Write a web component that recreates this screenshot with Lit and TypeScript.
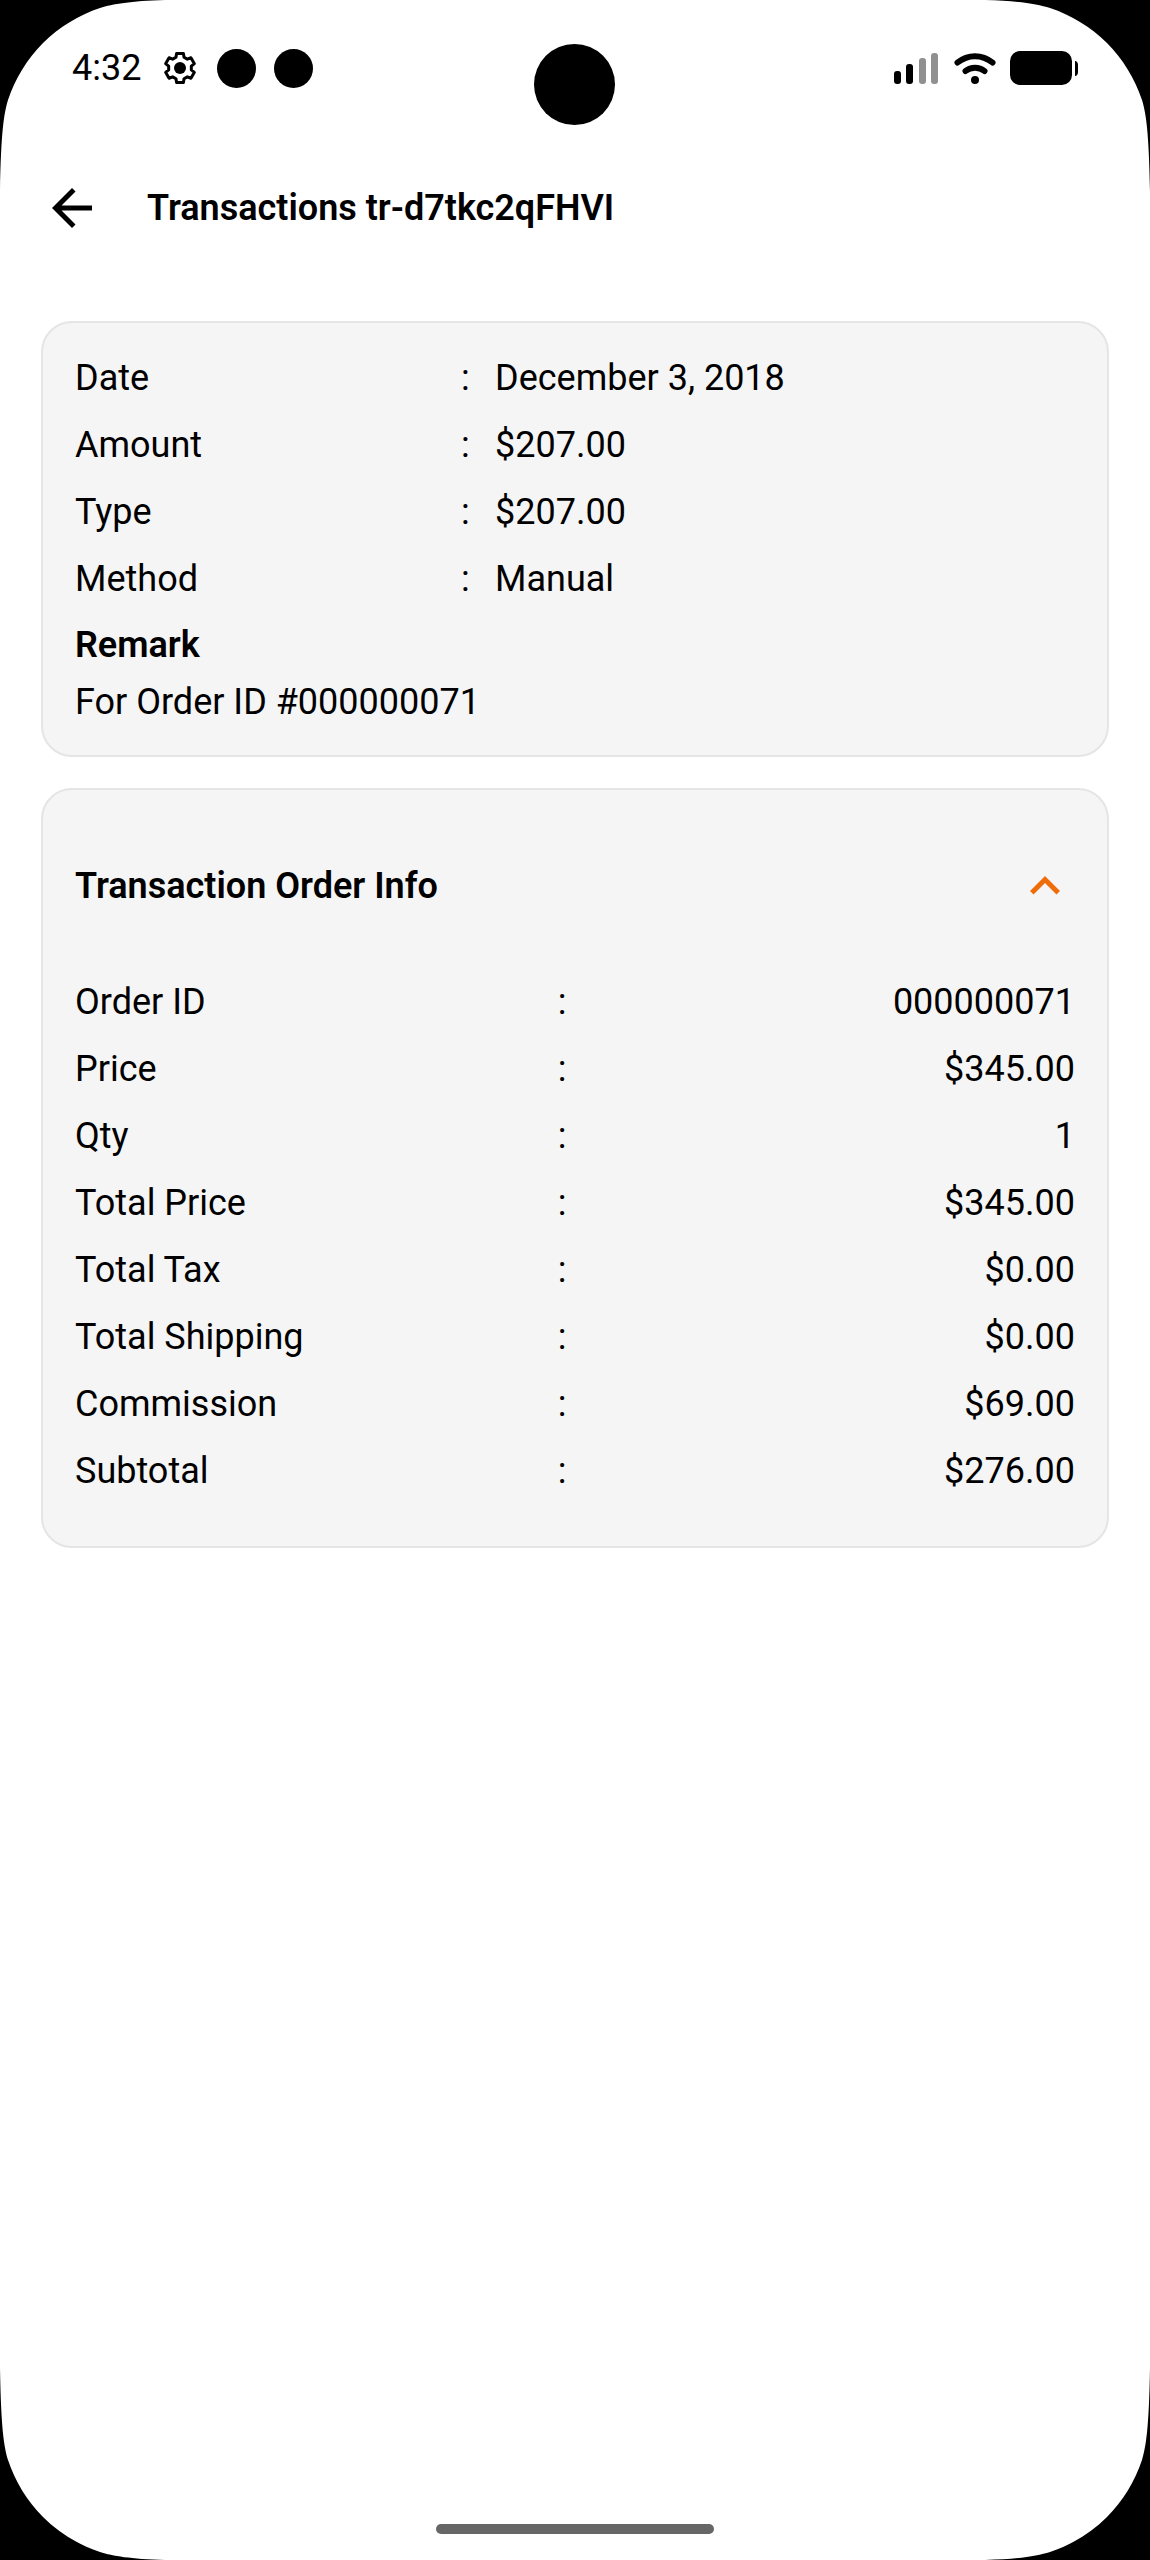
import { LitElement, html, css } from "lit";
import { customElement, property, state } from "lit/decorators.js";

type Entry = [label: string, value: string];

const SUMMARY: Entry[] = [
  ["Date", "December 3, 2018"],
  ["Amount", "$207.00"],
  ["Type", "$207.00"],
  ["Method", "Manual"],
];

const ORDER: Entry[] = [
  ["Order ID", "000000071"],
  ["Price", "$345.00"],
  ["Qty", "1"],
  ["Total Price", "$345.00"],
  ["Total Tax", "$0.00"],
  ["Total Shipping", "$0.00"],
  ["Commission", "$69.00"],
  ["Subtotal", "$276.00"],
];

// Outline of a gear centred on the origin, with its first tooth at the top.
function gearOutline(teeth: number, outer: number, inner: number): string {
  const points: string[] = [];
  const step = (Math.PI * 2) / teeth;
  for (let i = 0; i < teeth; i++) {
    const mid = i * step - Math.PI / 2;
    const corners: [number, number][] = [
      [inner, -0.34],
      [outer, -0.22],
      [outer, 0.22],
      [inner, 0.34],
    ];
    for (const [radius, turn] of corners) {
      const angle = mid + turn * step;
      points.push(`${(radius * Math.cos(angle)).toFixed(2)} ${(radius * Math.sin(angle)).toFixed(2)}`);
    }
  }
  return `M${points.join("L")}Z`;
}

@customElement("status-bar")
export class StatusBar extends LitElement {
  static styles = css`
    :host {
      display: block;
    }
    .bar {
      display: flex;
      align-items: center;
      justify-content: space-between;
      height: 136px;
      padding: 0 72px;
      box-sizing: border-box;
    }
    .group {
      display: flex;
      align-items: center;
    }
    .time {
      font-size: 36px;
      line-height: 42px;
      margin-right: 22px;
    }
    .gear {
      margin-right: 20px;
    }
    .dot {
      width: 39px;
      height: 39px;
      border-radius: 50%;
      background: #000;
      margin-right: 18px;
    }
    svg {
      display: block;
    }
    .signal,
    .wifi {
      margin-right: 14px;
    }
  `;

  render() {
    return html`
      <div class="bar">
        <div class="group">
          <span class="time">4:32</span>
          <svg class="gear" width="34" height="34" viewBox="-17 -17 34 34" aria-hidden="true">
            <path d=${gearOutline(6, 15, 11.5)} fill="none" stroke="#000" stroke-width="3" stroke-linejoin="round" />
            <circle r="6" />
          </svg>
          <span class="dot"></span>
          <span class="dot"></span>
        </div>
        <div class="group">
          <svg class="signal" width="46" height="34" viewBox="0 0 46 34" aria-hidden="true">
            <rect x="0" y="20" width="7" height="13" rx="3" />
            <rect x="12" y="13" width="7" height="20" rx="3" />
            <rect x="25" y="7" width="7" height="26" rx="3" fill="#909090" />
            <rect x="37" y="2" width="7" height="31" rx="3" fill="#909090" />
          </svg>
          <svg class="wifi" width="42" height="34" viewBox="0 0 42 34" aria-hidden="true">
            <g fill="none" stroke="#000" stroke-width="6" stroke-linecap="round">
              <path d="M3.500 11.500C14 3 28 3 38.500 11.500" />
              <path d="M11.500 20C17 15.500 25 15.500 30.500 20" />
            </g>
            <circle cx="21" cy="29" r="4" />
          </svg>
          <svg width="68" height="34" viewBox="0 0 68 34" aria-hidden="true">
            <rect width="62" height="34" rx="10" />
            <path d="M65 10c2 0 3 2 3 4v7c0 2-1 4-3 4z" />
          </svg>
        </div>
      </div>
    `;
  }
}

@customElement("entry-table")
export class EntryTable extends LitElement {
  @property({ attribute: false }) entries: Entry[] = [];
  @property() variant: "start" | "end" = "start";

  static styles = css`
    :host {
      display: block;
    }
    table,
    tbody {
      display: block;
    }
    .row {
      display: grid;
      align-items: center;
      height: 67px;
    }
    .start {
      grid-template-columns: 193fr 17fr 290fr;
    }
    .end {
      grid-template-columns: 14fr 1fr 14fr;
    }
    .label,
    .colon,
    .value {
      padding: 0;
      font-weight: 400;
      text-align: left;
    }
    .end .value {
      text-align: right;
    }
  `;

  render() {
    return html`
      <table>
        <tbody>
          ${this.entries.map(
            ([label, value]) => html`
              <tr class="row ${this.variant}">
                <th class="label" scope="row">${label}</th>
                <td class="colon">:</td>
                <td class="value">${value}</td>
              </tr>
            `,
          )}
        </tbody>
      </table>
    `;
  }
}

@customElement("app-root")
export class AppRoot extends LitElement {
  @state() private open = true;

  static styles = css`
    :host {
      display: block;
      color: #000;
      background: #fff;
      font-family: Roboto, "Liberation Sans", sans-serif;
      font-size: 36px;
      line-height: 42px;
    }
    .screen {
      position: relative;
      display: flex;
      flex-direction: column;
      min-height: 100vh;
      overflow: hidden;
    }
    .camera {
      position: absolute;
      top: 44px;
      left: calc(50% - 41px);
      width: 81px;
      height: 81px;
      border-radius: 50%;
      background: #000;
    }
    .corner {
      position: absolute;
      width: 192px;
      height: 192px;
      pointer-events: none;
    }
    .top {
      top: 0;
    }
    .bottom {
      bottom: 0;
    }
    .left {
      left: 0;
    }
    .right {
      right: 0;
    }
    .header {
      display: flex;
      align-items: center;
      gap: 45px;
      height: 144px;
      padding: 0 42px;
    }
    .back,
    .toggle {
      border: 0;
      padding: 0;
      margin: 0;
      background: none;
      color: inherit;
      font: inherit;
      cursor: pointer;
    }
    svg {
      display: block;
    }
    .title,
    .heading,
    .remark-title {
      margin: 0;
      font-size: 36px;
      line-height: 42px;
      font-weight: 600;
    }
    .content {
      flex: 1;
      display: flex;
      flex-direction: column;
      gap: 31px;
      padding: 41px;
    }
    .card {
      background: #f5f5f5;
      border: 2px solid #e5e5e5;
      border-radius: 31px;
      padding: 21px 32px 20px;
    }
    .remark-title {
      padding: 12px 0 7px;
    }
    .remark {
      margin: 0;
      padding: 8px 0 12px;
    }
    .order {
      padding: 14px 32px 42px;
    }
    .toggle {
      display: flex;
      align-items: center;
      justify-content: space-between;
      width: 100%;
      height: 164px;
      text-align: left;
    }
    .chevron {
      color: #ef6c0a;
    }
    .closed {
      transform: rotate(180deg);
    }
    .home {
      align-self: center;
      width: 278px;
      height: 10px;
      margin-bottom: 26px;
      border-radius: 5px;
      background: #666;
    }
  `;

  private corner(place: string, flip: string) {
    return html`
      <svg class="corner ${place}" viewBox="-96 -96 192 192" aria-hidden="true">
        <g transform="scale(${flip})">
          <path
            transform="translate(-96 -96)"
            d="M0 0V192C1 132 4 113 8 100C15 79 27 59 43 43C59 27 79 15 100 8C113 4 130 1 165 0Z"
          />
        </g>
      </svg>
    `;
  }

  render() {
    return html`
      <div class="screen">
        <status-bar></status-bar>
        <header class="header">
          <button class="back" type="button" aria-label="Back">
            <svg width="60" height="60" viewBox="0 0 24 24" fill="currentColor" aria-hidden="true">
              <path d="M20 11H7.830l5.590-5.590L12 4l-8 8 8 8 1.410-1.410L7.830 13H20z" />
            </svg>
          </button>
          <h1 class="title">Transactions tr-d7tkc2qFHVI</h1>
        </header>
        <main class="content">
          <section class="card">
            <entry-table .entries=${SUMMARY} variant="start"></entry-table>
            <h2 class="remark-title">Remark</h2>
            <p class="remark">For Order ID #000000071</p>
          </section>
          <section class="card order">
            <h2 class="heading">
              <button
                class="toggle"
                type="button"
                aria-expanded=${this.open ? "true" : "false"}
                @click=${() => (this.open = !this.open)}
              >
                <span>Transaction Order Info</span>
                <svg
                  class="chevron ${this.open ? "" : "closed"}"
                  width="60"
                  height="60"
                  viewBox="0 0 24 24"
                  fill="currentColor"
                  aria-hidden="true"
                >
                  <path d="M12 8l-6 6 1.410 1.410L12 10.830l4.590 4.580L18 14z" />
                </svg>
              </button>
            </h2>
            ${this.open ? html`<entry-table .entries=${ORDER} variant="end"></entry-table>` : null}
          </section>
        </main>
        <div class="home"></div>
        <div class="camera"></div>
        ${this.corner("top left", "1 1")} ${this.corner("top right", "-1 1")}
        ${this.corner("bottom right", "-1 -1")} ${this.corner("bottom left", "1 -1")}
      </div>
    `;
  }
}
